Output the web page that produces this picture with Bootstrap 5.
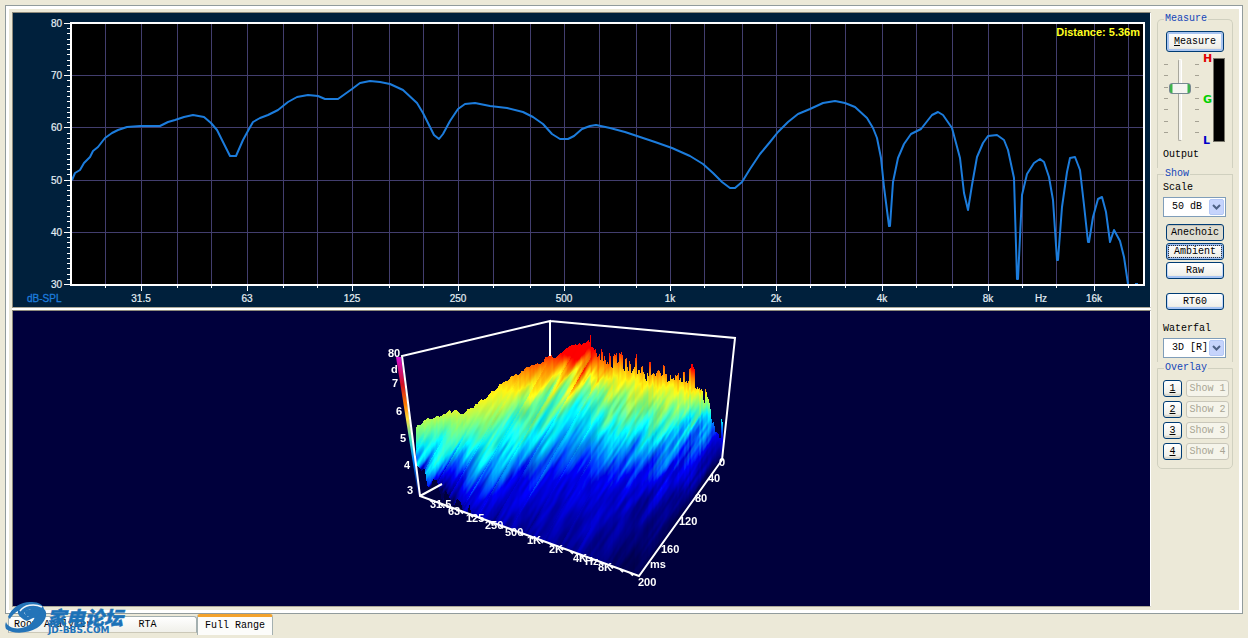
<!DOCTYPE html>
<html lang="en">
<head>
<meta charset="utf-8">
<meta name="viewport" content="width=device-width, initial-scale=1">
<title>Full Range</title>
<link href="https://cdn.jsdelivr.net/npm/bootstrap@5.3.0/dist/css/bootstrap.min.css" rel="stylesheet">
<style>
  body { background: #ece9d8; color: #000; font: 10px/12px "Liberation Mono", monospace; }
  .page-frame { margin: 5px 5px 0; border: 1px solid #919b9c; }
  .page-inner { border: 3px solid #fff; padding: 3px; background: #ece9d8; }
  .plots { min-width: 0; }
  .plot { border: 1px solid #8d8a7c; border-right-color: #fff; border-bottom-color: #aca899; }
  .plot svg { display: block; width: 100%; height: auto; }
  .plot-spl { background: #00203c; }
  .plot-3d { background: #00003c; border-top: 1px solid #8d8a7c; }
  .plot-gap { height: 2px; background: #fff; }
  .plot text, .scene text { font-family: "Liberation Sans", Arial, sans-serif; }
  .scene { display: grid; width: 400px; height: 295px; }
  .scene > * { grid-area: 1 / 1; }

  .side { width: 76px; margin: 1px 3px 0 6px; }
  .group { border: 1px solid #d0d0bf; border-bottom: 0; padding: 0 0 4px 5px; min-width: 0; }
  .group:first-child { border-radius: 5px 5px 0 0; }
  .group:last-child { padding-bottom: 8px; border-bottom: 1px solid #d0d0bf; border-radius: 0 0 5px 5px; }
  .group legend { float: none; width: auto; margin: 0 0 0 1px; padding: 0 1px; font: inherit; color: #1446b8; }
  .group label { display: block; margin: 2px 0 3px; }
  .xp { display: block; height: 17px; padding: 0; border: 1px solid #003c74; border-radius: 3px; font: inherit; color: #000;
        background: linear-gradient(#fff, #f0f0ea 80%, #d8d4c8); box-shadow: inset 0 -2px 0 #a6c4f4, inset 1px 0 0 #c4d8fa, inset -1px 0 0 #c4d8fa; }
  .xp-wide { width: 58px; margin-left: 3px; }
  .xp-main { height: 21px; margin-top: 6px; box-shadow: inset 0 0 0 2px #a8c4f0; }
  .xp-down { background: #dedcd0; box-shadow: inset 0 1px 0 #c4c2b8; }
  .xp-focus { outline: 1px dotted #333; outline-offset: -3px; box-shadow: inset 0 0 0 2px #9cbcf0; }
  .xp-num { width: 19px; box-shadow: inset 0 -2px 0 #dcdad0; }
  .xp-off { width: 43px; border-color: #c9c7ba; background: #f5f4ea; color: #a8a594; box-shadow: none; }
  .stack { display: grid; row-gap: 2px; margin: 7px 0 14px; }
  .rows { display: grid; row-gap: 4px; margin-top: 6px; }
  .spaced { margin-bottom: 13px; }
  .combo { display: block; width: 63px; height: 20px; padding: 0 18px 0 8px; border: 1px solid #7f9db9; border-radius: 0; color: #000; font: inherit; appearance: none;
    background: #fff url("data:image/svg+xml,%3Csvg xmlns='http://www.w3.org/2000/svg' width='15' height='16'%3E%3Crect x='.5' y='.5' width='14' height='15' rx='1.5' fill='%23c6d4fc' stroke='%23b4c8f6'/%3E%3Cpath d='M4 6l3.5 3.5L11 6' fill='none' stroke='%234d6185' stroke-width='2'/%3E%3C/svg%3E") right 1px center no-repeat; }
  .level { height: 94px; margin-top: 1px; }
  .fader { position: relative; width: 35px; margin-left: 1px; padding: 11px 0 14px; }
  .ticks { width: 4px; height: 69px; }
  .ticks i { height: 1px; background: #a5a294; }
  .fader input { position: absolute; width: 82px; height: 22px; left: -25px; top: 36px; margin: 0; background: none; appearance: none; transform: rotate(-90deg); }
  .fader input::-webkit-slider-runnable-track { height: 4px; border: 1px solid #9d9c99; border-color: #a8a79c #fff #fff #a8a79c; border-radius: 2px; background: #f4f3ee; }
  .fader input::-webkit-slider-thumb { appearance: none; width: 11px; height: 22px; margin-top: -10px; border: 1px solid #778892; border-radius: 3px; background: linear-gradient(#3cb44c 0 2px, #f5f5f1 3px 17px, #3cb44c 18px); }
  .marks { width: 10px; font: bold 11px/12px "DejaVu Sans", sans-serif; }
  .mark-h { color: #e00000; } .mark-g { color: #00d000; } .mark-l { color: #0000c8; }
  .meter { width: 12px; height: 84px; margin-top: 5px; border: 1px solid #77756a; background: #000; }

  .tabbar { position: relative; margin-left: 8px; height: 24px; }
  .tabbar button { height: 17px; margin-top: 2px; padding: 0; border: 1px solid #a4b0b0; border-bottom-color: #cbc8b8; border-radius: 3px 3px 0 0; background: linear-gradient(#fff, #f0f0ea); font: inherit; color: #000; }
  .tab-a { width: 90px; } .tab-b { width: 99px; }
  .tabbar .tab-on { width: 76px; height: 21px; margin-top: 0; border-top: 3px solid #f3a22c; border-bottom: 0; background: #fcfcfa; }
  .brand { position: absolute; left: -8px; top: -16px; pointer-events: none; }
</style>
</head>
<body>
<main class="page-frame">
  <div class="page-inner d-flex align-items-start">
    <div class="plots flex-grow-1">
      <div class="plot plot-spl">
        <svg viewBox="13 13 1137 294" id="spl" role="img" aria-label="SPL frequency response">
          <path fill="#000" d="M71 23H1144V285H71z"/>
          <g id="grid" stroke="#423e6e"></g>
          <path fill="none" stroke="#1c7cdc" stroke-width="2" stroke-linejoin="round" d="M72 180L75 173 80 170 84 163 90 157 93 151 98 147 105 138 112 133 118 130 127 127 140 126 160 126 168 122 175 120 184 117 193 115 204 117 211 123 217 130 224 144 230 156H236L243 140 249 129 253 122 260 118 268 115 278 110 288 102 297 97 308 95 318 96 325 99H338L345 94 352 89 360 83 370 81 380 82 390 84 403 90 417 103 423 113 430 127 434 135 439 139 443 134 450 121 458 109 465 104 475 103 490 106 507 108 523 112 533 117 543 124 552 134 560 139H568L574 136 582 129 590 126 596 125 610 128 625 132 640 137 655 142 672 148 690 156 703 164 713 173 722 182 730 188H735L742 182 750 169 760 154 770 142 778 132 788 122 798 114 810 109 823 103 835 101 845 103 855 107 867 118 873 128 877 138 881 158 884 187 889 226H890L893 182 898 158 904 144 911 134 921 129 932 115 938 112 943 115 952 128 960 158 964 193 968 210 972 185 977 157 983 143 988 136 997 135 1004 140 1008 150 1014 178 1017 279H1018L1022 195 1027 174 1034 163 1040 159 1044 162 1049 177 1053 200 1057 260H1058L1062 207 1067 172 1070 158 1075 157 1080 170 1084 205 1088 242H1089L1093 217 1098 199 1102 197 1106 212 1110 242 1114 230 1120 241 1124 257 1128 284M1135 284H1138"/>
          <path fill="none" stroke="#fff" stroke-width="2" d="M71 23H1144V285H71z"/>
          <g id="axis" stroke="#fff"></g>
          <g id="labels" fill="#e4eef4" font-size="10" stroke="#e4eef4" stroke-width=".2"></g>
          <text x="27" y="302" font-size="10" fill="#1c7cdc" stroke="#1c7cdc" stroke-width=".3">dB-SPL</text>
          <text x="1140" y="36" font-size="11" font-weight="bold" text-anchor="end" fill="#ffff20">Distance: 5.36m</text>
        </svg>
      </div>
      <div class="plot-gap"></div>
      <div class="plot plot-3d d-flex justify-content-center">
        <div class="scene">
          <canvas id="surface" width="400" height="295"></canvas>
          <svg viewBox="381 312 400 295" role="img" aria-label="3D waterfall">
            <defs><linearGradient id="scale" x1="0" y1="0" x2="0" y2="1">
              <stop offset="0" stop-color="#d010d0"/><stop offset=".2" stop-color="#d01020"/><stop offset=".35" stop-color="#ff8000"/><stop offset=".45" stop-color="#ffe040"/><stop offset=".6" stop-color="#40e0c0"/><stop offset=".75" stop-color="#0080ff"/><stop offset="1" stop-color="#000060"/>
            </linearGradient></defs>
            <path fill="url(#scale)" d="M395 358H400L419 496H417z"/>
            <path fill="none" stroke="#fff" stroke-width="2" d="M549 357V322L401 357 419 497 638 577 721 461 734 339 549 322M419 497L441 485"/>
            <g stroke="#fff" stroke-width="2" id="ticks3d"></g>
            <g fill="#fff" font-size="11" font-weight="bold" id="labels3d"></g>
          </svg>
        </div>
      </div>
    </div>
    <aside class="side">
      <fieldset class="group">
        <legend>Measure</legend>
        <button class="xp xp-wide xp-main" type="button"><u>M</u>easure</button>
        <div class="level d-flex">
          <div class="fader d-flex justify-content-between">
            <div class="ticks d-flex flex-column justify-content-between"><i></i><i></i><i></i><i></i><i></i><i></i><i></i></div>
            <input type="range" id="output" min="0" max="100" value="66">
            <div class="ticks d-flex flex-column justify-content-between"><i></i><i></i><i></i><i></i><i></i><i></i><i></i></div>
          </div>
          <div class="marks ms-1 d-flex flex-column justify-content-between">
            <span class="mark-h">H</span><span class="mark-g">G</span><span class="mark-l">L</span>
          </div>
          <div class="meter"></div>
        </div>
        <label for="output">Output</label>
      </fieldset>
      <fieldset class="group">
        <legend>Show</legend>
        <label for="range">Scale</label>
        <select class="combo" id="range"><option>50 dB</option></select>
        <div class="stack">
          <button class="xp xp-wide xp-down" type="button">Anechoic</button>
          <button class="xp xp-wide xp-focus" type="button">Ambient</button>
          <button class="xp xp-wide" type="button">Raw</button>
        </div>
        <button class="xp xp-wide spaced" type="button">RT60</button>
        <label for="mode">Waterfal</label>
        <select class="combo" id="mode"><option>3D [R]</option></select>
      </fieldset>
      <fieldset class="group">
        <legend>Overlay</legend>
        <div class="rows">
          <div class="d-flex gap-1"><button class="xp xp-num" type="button"><u>1</u></button><button class="xp xp-off" type="button" disabled>Show 1</button></div>
          <div class="d-flex gap-1"><button class="xp xp-num" type="button"><u>2</u></button><button class="xp xp-off" type="button" disabled>Show 2</button></div>
          <div class="d-flex gap-1"><button class="xp xp-num" type="button"><u>3</u></button><button class="xp xp-off" type="button" disabled>Show 3</button></div>
          <div class="d-flex gap-1"><button class="xp xp-num" type="button"><u>4</u></button><button class="xp xp-off" type="button" disabled>Show 4</button></div>
        </div>
      </fieldset>
    </aside>
  </div>
</main>
<nav class="tabbar d-flex align-items-start">
  <button class="tab-a" type="button">Room Analyzer</button>
  <button class="tab-b" type="button">RTA</button>
  <button class="tab-on" type="button">Full Range</button>
  <svg class="brand" width="130" height="40" viewBox="0 598 130 40">
    <path fill="#2474b8" d="M8 617C12 606 23 601 32 602 39 602 43 605 44 609 49 613 45 623 37 628 27 634 12 634 6 629 5 627 5 624 6 622 8 628 17 630 25 627 31 625 33 621 35 617L27 621C22 619 17 615 18 611 13 614 11 617 10 619z"/>
    <path fill="none" stroke="#f2f6fa" stroke-width="1.5" d="M42 607C34 603 24 605 20 611M25 613C27 610 32 609 36 611L28 616z"/>
    <path fill="#2474b8" d="M24 611L35 608 42 612 35 618 26 616z"/>
    <g fill="#1c72b8" font-weight="900">
      <text x="47" y="625" font-size="19" font-style="italic" stroke="#1c72b8" stroke-width=".4" font-family="Noto Sans CJK SC, sans-serif">家电论坛</text>
      <text x="48" y="633" font-size="9" font-family="DejaVu Sans, sans-serif">JD-BBS.COM</text>
    </g>
  </svg>
</nav>
<script src="https://cdn.jsdelivr.net/npm/bootstrap@5.3.0/dist/js/bootstrap.bundle.min.js"></script>
<script>
  const add = (id, html) => document.getElementById(id).insertAdjacentHTML('beforeend', html);
  const line = (x1, y1, x2, y2) => `<path d="M${x1} ${y1}L${x2} ${y2}"/>`;
  // third-octave grid
  const cols = [105,141,177,211,247,283,317,352,389,423,458,493,530,564,599,636,670,704,742,776,810,845,882,916,952,988,1022,1056,1094,1128];
  const major = {141:'31.5',247:'63',352:'125',458:'250',564:'500',670:'1k',776:'2k',882:'4k',988:'8k',1094:'16k'};
  const text = (x, y, s, a) => `<text x="${x}" y="${y}" text-anchor="${a}">${s}</text>`;
  cols.forEach(x => {
    add('grid', line(x + .5, 24, x + .5, 284));
    add('axis', line(x + .5, 286, x + .5, major[x] ? 291 : 288));
    if (major[x]) add('labels', text(x, 302, major[x], 'middle'));
  });
  add('labels', text(1041, 302, 'Hz', 'middle'));
  for (let i = 0; i <= 50; i++) {
    const y = Math.round(23 + i * 5.22) + .5;
    add('axis', line(i % 10 ? 67 : 64, y, 70, y));
    if (i % 10 === 0) { add('labels', text(62, y + 3, 80 - i, 'end')); if (i && i < 50) add('grid', line(72, y, 1143, y)); }
  }
  // labels of the waterfall
  [[387,358,'80'],[390,374,'d'],[391,388,'7'],[395,416,'6'],[399,443,'5'],[403,470,'4'],[406,495,'3'],
   [429,509,'31.5'],[447,516,'63'],[465,523,'125'],[484,530,'250'],[504,537,'500'],[526,545,'1K'],[548,554,'2K'],[572,563,'4K'],[584,566,'Hz'],[597,572,'8K'],
   [718,467,'0'],[707,483,'40'],[694,503,'80'],[678,526,'120'],[660,554,'160'],[649,569,'ms'],[637,587,'200']]
    .forEach(l => add('labels3d', text(l[0], l[1], l[2], 'start')));
  for (let i = 1; i < 22; i++) add('ticks3d', line(419 + i * 10, 497 + i * 3.65, 422 + i * 10, 500 + i * 3.65));

  // decay surface: each key column holds the y of its top and of every colour level
  const ramp = [[255,0,0],[255,130,0],[255,245,20],[130,255,120],[0,245,255],[0,130,255],[0,0,240],[0,0,150],[0,0,80]];
  const keys = [ // x, top, then y of each colour in ramp
    [415,427, 380,395,412,430,449,461,471,476,484],[440,416, 376,392,408,424,447,464,482,494,502],
    [470,412, 368,384,404,424,452,470,490,518,535],[500,385, 354,368,390,418,445,470,490,530,550],
    [530,367, 354,372,390,406,433,462,486,540,570],[550,357, 352,366,382,400,425,455,480,545,590],
    [567,351, 356,366,378,394,420,452,478,545,590],
    [578,345, 356,366,378,395,420,450,478,545,590],[587,340, 352,366,377,394,422,450,476,545,590],[600,360, 350,364,377,394,424,452,476,540,590],
    [630,374, 352,364,379,400,430,454,480,525,575],[660,378, 362,373,388,408,436,455,475,505,550],
    [690,382, 366,376,390,405,423,438,452,478,510],[705,406, 382,390,396,405,417,428,440,465,485],
    [715,430, 386,392,400,408,416,422,434,456,475],[721,442, 388,396,404,412,420,426,436,452,470]];
  const hash = n => { const s = Math.sin(n * 127.1 + 11.7) * 43758.5453; return s - Math.floor(s); };
  const n1 = t => { const i = Math.floor(t), f = t - i, k = f * f * (3 - 2 * f); return hash(i) * (1 - k) + hash(i + 1) * k - .5; };
  const n2 = (a, b) => { const i = Math.floor(b), f = b - i, k = f * f * (3 - 2 * f); return n1(a + i * 57.3) * (1 - k) + n1(a + (i + 1) * 57.3) * k; };
  const ctx = document.getElementById('surface').getContext('2d');
  const img = ctx.createImageData(400, 295);
  for (let x = 415; x <= 721; x++) {
    let k = 0; while (k < keys.length - 2 && keys[k + 1][0] <= x) k++;
    const A = keys[k], B = keys[k + 1], f = (x - A[0]) / (B[0] - A[0]);
    const v = A.map((a, i) => a + (B[i] - a) * f);
    const spiky = x > 588;
    // spikes get narrow and dense towards the high frequencies
    const spike = spiky ? n1(x / 5) * 8 - Math.pow(hash(x >> 1), 2) * 19 + hash(x) * 5 : n1(x / 7) * 6 + n1(x / 2) * 3;
    const top = v[1] + spike;
    let bottom = x < 638 ? 497 + (x - 419) * .365 : 577 - (x - 638) * 1.4;
    if (x < 470) bottom = Math.min(bottom, 474 + (x - 415) * .75 + n1(x / 3) * 22);
    for (let y = Math.round(top); y < bottom; y++) {
      const depth = Math.max(0, Math.min(1, (y - v[1]) / 40));
      const u = x * .85 + y * .53, w = y * .5 - x * .35;
      let s = n2(u / 6, w / 30) * 32 + n2(u / 2.2, w / 16) * 14;
      s = s * depth + n1(x / 1.7) * 7 * (spiky ? 1 : .5);
      // folds of the ridge that runs along the low frequencies
      if (x < 590) s += (((x * .85 + y * .5) / 17 % 1) - .5) * 9 * depth;
      const q = y + s;
      let j = 2; while (j < 9 && v[j + 1] < q) j++;
      const g = Math.max(0, Math.min(1, (q - v[j]) / (v[j + 1] - v[j])));
      const c = ramp[j - 2], d = ramp[j - 1];
      const shade = 1 + n2(u / 3, w / 12) * .25 * depth;
      const o = ((y - 312) * 400 + x - 381) * 4;
      for (let m = 0; m < 3; m++) img.data[o + m] = (c[m] + (d[m] - c[m]) * g) * shade;
      img.data[o + 3] = 255;
    }
  }
  ctx.putImageData(img, 0, 0);
</script>
</body>
</html>
